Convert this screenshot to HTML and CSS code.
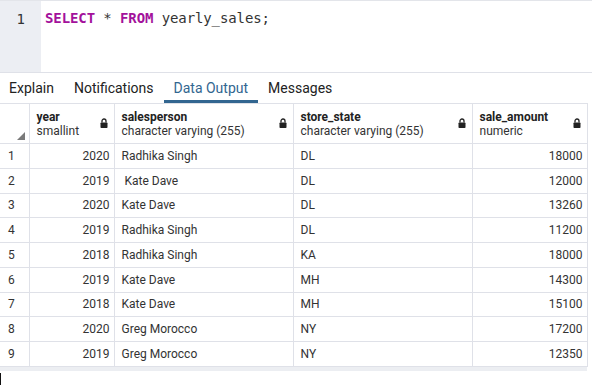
FILE: index.html
```html
<!DOCTYPE html>
<html lang="en">
<head>
    <meta charset="UTF-8">
    <meta name="viewport" content="width=device-width, initial-scale=1.0">
    <title>Query Tool</title>
    <link rel="stylesheet" href="styles.css">
</head>
<body>
  <div class="editor">
    <div class="gutter">1</div>
    <div class="code"><span class="kw">SELECT</span> * <span class="kw">FROM</span> yearly_sales;</div>
  </div>

  <div class="tabs">
    <div class="tab">Explain</div>
    <div class="tab">Notifications</div>
    <div class="tab active">Data Output</div>
    <div class="tab">Messages</div>
  </div>

  <table class="grid">
    <colgroup>
      <col style="width: 29px">
      <col style="width: 85px">
      <col style="width: 179px">
      <col style="width: 179px">
      <col style="width: 115px">
    </colgroup>
    <thead>
      <tr>
        <th class="corner"><span class="sort"></span></th>
        <th>
          <div class="head">
            <div class="col"><b>year</b><span>smallint</span></div>
            <svg class="lock" width="8" height="10" viewBox="0 0 8 10"><path d="M2 4.5V3a2 2 0 0 1 4 0v1.5" fill="none" stroke="#222" stroke-width="1.3"/><rect x="0.5" y="4.5" width="7" height="5.5" rx="0.8" fill="#222"/></svg>
          </div>
        </th>
        <th>
          <div class="head">
            <div class="col"><b>salesperson</b><span>character varying (255)</span></div>
            <svg class="lock" width="8" height="10" viewBox="0 0 8 10"><path d="M2 4.5V3a2 2 0 0 1 4 0v1.5" fill="none" stroke="#222" stroke-width="1.3"/><rect x="0.5" y="4.5" width="7" height="5.5" rx="0.8" fill="#222"/></svg>
          </div>
        </th>
        <th>
          <div class="head">
            <div class="col"><b>store_state</b><span>character varying (255)</span></div>
            <svg class="lock" width="8" height="10" viewBox="0 0 8 10"><path d="M2 4.5V3a2 2 0 0 1 4 0v1.5" fill="none" stroke="#222" stroke-width="1.3"/><rect x="0.5" y="4.5" width="7" height="5.5" rx="0.8" fill="#222"/></svg>
          </div>
        </th>
        <th>
          <div class="head">
            <div class="col"><b>sale_amount</b><span>numeric</span></div>
            <svg class="lock" width="8" height="10" viewBox="0 0 8 10"><path d="M2 4.5V3a2 2 0 0 1 4 0v1.5" fill="none" stroke="#222" stroke-width="1.3"/><rect x="0.5" y="4.5" width="7" height="5.5" rx="0.8" fill="#222"/></svg>
          </div>
        </th>
      </tr>
    </thead>
    <tbody>
      <tr><td class="num">1</td><td class="r">2020</td><td>Radhika Singh</td><td>DL</td><td class="r">18000</td></tr>
      <tr><td class="num">2</td><td class="r">2019</td><td class="pre"> Kate Dave</td><td>DL</td><td class="r">12000</td></tr>
      <tr><td class="num">3</td><td class="r">2020</td><td>Kate Dave</td><td>DL</td><td class="r">13260</td></tr>
      <tr><td class="num">4</td><td class="r">2019</td><td>Radhika Singh</td><td>DL</td><td class="r">11200</td></tr>
      <tr><td class="num">5</td><td class="r">2018</td><td>Radhika Singh</td><td>KA</td><td class="r">18000</td></tr>
      <tr><td class="num">6</td><td class="r">2019</td><td>Kate Dave</td><td>MH</td><td class="r">14300</td></tr>
      <tr><td class="num">7</td><td class="r">2018</td><td>Kate Dave</td><td>MH</td><td class="r">15100</td></tr>
      <tr><td class="num">8</td><td class="r">2020</td><td>Greg Morocco</td><td>NY</td><td class="r">17200</td></tr>
      <tr><td class="num">9</td><td class="r">2019</td><td>Greg Morocco</td><td>NY</td><td class="r">12350</td></tr>
    </tbody>
  </table>
  <div class="scroll"></div>
  <div class="caret"></div>
</body>
</html>
```

FILE: styles.css
```css
body {
  margin: 0;
  padding: 0;
  background: white;
  font-family: Roboto, 'Liberation Sans', sans-serif;
  color: #222;
}
.editor {
  height: 71px;
  display: flex;
  border-top: 1px solid #e3e5ea;
}
.gutter {
  width: 41px;
  background: #eceef3;
  box-sizing: border-box;
  padding: 10px 16px 0 0;
  text-align: right;
  font-family: 'DejaVu Sans Mono', monospace;
  font-size: 14px;
  color: #333;
}
.code {
  padding: 9px 0 0 4px;
  font-family: 'DejaVu Sans Mono', monospace;
  font-size: 14px;
  color: #333;
  letter-spacing: -0.1px;
}
.kw {
  color: #a3119b;
  font-weight: bold;
}
.tabs {
  display: flex;
  height: 30px;
  border-top: 1px solid #dfe1e8;
  margin-left: -1px;
}
.tab {
  padding: 0 10px;
  font-size: 14px;
  line-height: 30px;
  color: #222;
  box-sizing: border-box;
  border-bottom: 3px solid transparent;
}
.tab.active {
  color: #326690;
  border-bottom-color: #326690;
  height: 30px;
}
.grid {
  border-collapse: collapse;
  table-layout: fixed;
  width: 587px;
  font-size: 12px;
}
.grid th {
  height: 39px;
  padding: 0 6px 0 7px;
  border: 1px solid #dfe1e8;
  text-align: left;
  font-weight: normal;
}
.corner {
  position: relative;
  border-left: none !important;
  padding: 0 !important;
}
.sort {
  position: absolute;
  right: 4px;
  bottom: 3px;
  width: 0;
  height: 0;
  border-left: 8px solid transparent;
  border-bottom: 8px solid #7a7a7a;
}
.head {
  display: flex;
  align-items: center;
  justify-content: space-between;
}
.col {
  display: flex;
  flex-direction: column;
  line-height: 14px;
}
.col b {
  font-weight: bold;
  color: #222;
}
.col span {
  color: #333;
}
.lock {
  margin-top: -2px;
}
.grid td {
  height: 23.75px;
  padding: 0 6px 0 7px;
  border: 1px solid #dfe1e8;
  border-top: none;
  color: #333;
  white-space: nowrap;
  overflow: hidden;
}
.grid td.num {
  padding: 0 0 0 8px;
  border-left: none;
}
.grid td.r {
  text-align: right;
  padding-right: 4px;
}
.grid td.pre {
  white-space: pre;
}
.scroll {
  width: 587px;
  height: 4px;
  background: #eceef2;
}
.caret {
  width: 1px;
  height: 13px;
  margin-top: 2px;
  background: #111;
}
```
